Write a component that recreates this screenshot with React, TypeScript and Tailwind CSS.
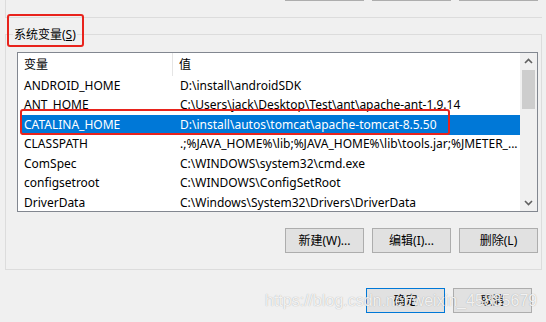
const rows: [string, string][] = [
  ["ANDROID_HOME", "D:\\install\\androidSDK"],
  ["ANT_HOME", "C:\\Users\\jack\\Desktop\\Test\\ant\\apache-ant-1.9.14"],
  ["CATALINA_HOME", "D:\\install\\autos\\tomcat\\apache-tomcat-8.5.50"],
  ["CLASSPATH", ".;%JAVA_HOME%\\lib;%JAVA_HOME%\\lib\\tools.jar;%JMETER_..."],
  ["ComSpec", "C:\\WINDOWS\\system32\\cmd.exe"],
  ["configsetroot", "C:\\WINDOWS\\ConfigSetRoot"],
  ["DriverData", "C:\\Windows\\System32\\Drivers\\DriverData"],
];

function Btn({ label, primary }: { label?: string; primary?: boolean }) {
  return (
    <div
      className={`flex h-[25px] w-[79px] shrink-0 items-center justify-center border bg-[#e1e1e1] text-[12px] text-black ${
        primary ? "border-[#0078d7]" : "border-[#adadad]"
      }`}
    >
      {label}
    </div>
  );
}

export default function App() {
  return (
    <div className="relative flex h-[322px] w-[546px] flex-col overflow-hidden bg-[#f0f0f0] font-['Noto_Sans','Noto_Sans_CJK_SC',sans-serif] text-[12px] text-black">
      {/* upper group box tail + its buttons (cut off at the top) */}
      <div className="ml-[5px] flex h-[18px] w-[537px] flex-col border-b border-l border-[#dcdcdc]">
        <div className="-mt-[24px] ml-[279px] flex gap-[8px]">
          <Btn />
          <Btn />
          <Btn />
        </div>
      </div>

      {/* system variables group */}
      <div className="relative ml-[5px] mt-[16px] flex h-[236px] w-[537px] flex-col border border-[#dcdcdc]">
        <div className="absolute -top-[9px] left-[7px] bg-[#f0f0f0] px-[1px] leading-[18px]">
          系统变量(<span className="underline">S</span>)
        </div>
        <div className="absolute left-[1px] top-[-21px] h-[33px] w-[77px] rounded-[3px] border-2 border-[#e8231c]" />

        <div className="ml-[11px] mt-[17px] flex h-[160px] w-[521px] border border-[#828790] bg-white">
          <div className="flex-1">
            <div className="flex h-[23px] items-center">
              <div className="h-full w-[155px] border-r border-[#e5e5e5] pl-[6px] leading-[23px]">变量</div>
              <div className="pl-[6px]">值</div>
            </div>
            {rows.map(([name, value]) => {
              const sel = name === "CATALINA_HOME";
              return (
                <div
                  key={name}
                  className={`ml-[4px] flex h-[19.5px] items-center whitespace-nowrap ${
                    sel ? "bg-[#0078d7] text-white" : ""
                  }`}
                >
                  <div className="w-[152px] pl-[2px]">{name}</div>
                  <div className="pl-[6px]">{value}</div>
                </div>
              );
            })}
          </div>
          <div className="flex w-[17px] flex-col items-center bg-[#f0f0f0]">
            <svg width="17" height="17" viewBox="0 0 17 17" className="shrink-0">
              <path d="M5 10 L8.5 6.5 L12 10" fill="none" stroke="#606060" strokeWidth="1.6" />
            </svg>
            <div className="h-[39px] w-[13px] bg-[#cdcdcd]" />
            <div className="flex-1" />
            <svg width="17" height="17" viewBox="0 0 17 17" className="shrink-0">
              <path d="M5 7 L8.5 10.5 L12 7" fill="none" stroke="#606060" strokeWidth="1.6" />
            </svg>
          </div>
        </div>

        <div className="ml-[279px] mt-[16px] flex gap-[8px]">
          <Btn label="新建(W)..." />
          <Btn label="编辑(I)..." />
          <Btn label="删除(L)" />
        </div>
      </div>

      {/* red highlight around selected row */}
      <div className="pointer-events-none absolute left-[20px] top-[109px] h-[26px] w-[430px] rounded-[3px] border-2 border-[#e8231c]" />

      <div className="ml-[366px] mt-[18px] flex gap-[8px]">
        <Btn label="确定" primary />
        <Btn label="取消" />
      </div>

      <div className="pointer-events-none absolute left-[265px] top-[289px] font-['Liberation_Sans',sans-serif] text-[16px] text-white/85 [text-shadow:0_0_1px_rgba(0,0,0,0.35)]">
        https://blog.csdn.net/weixin_45835679
      </div>
    </div>
  );
}
